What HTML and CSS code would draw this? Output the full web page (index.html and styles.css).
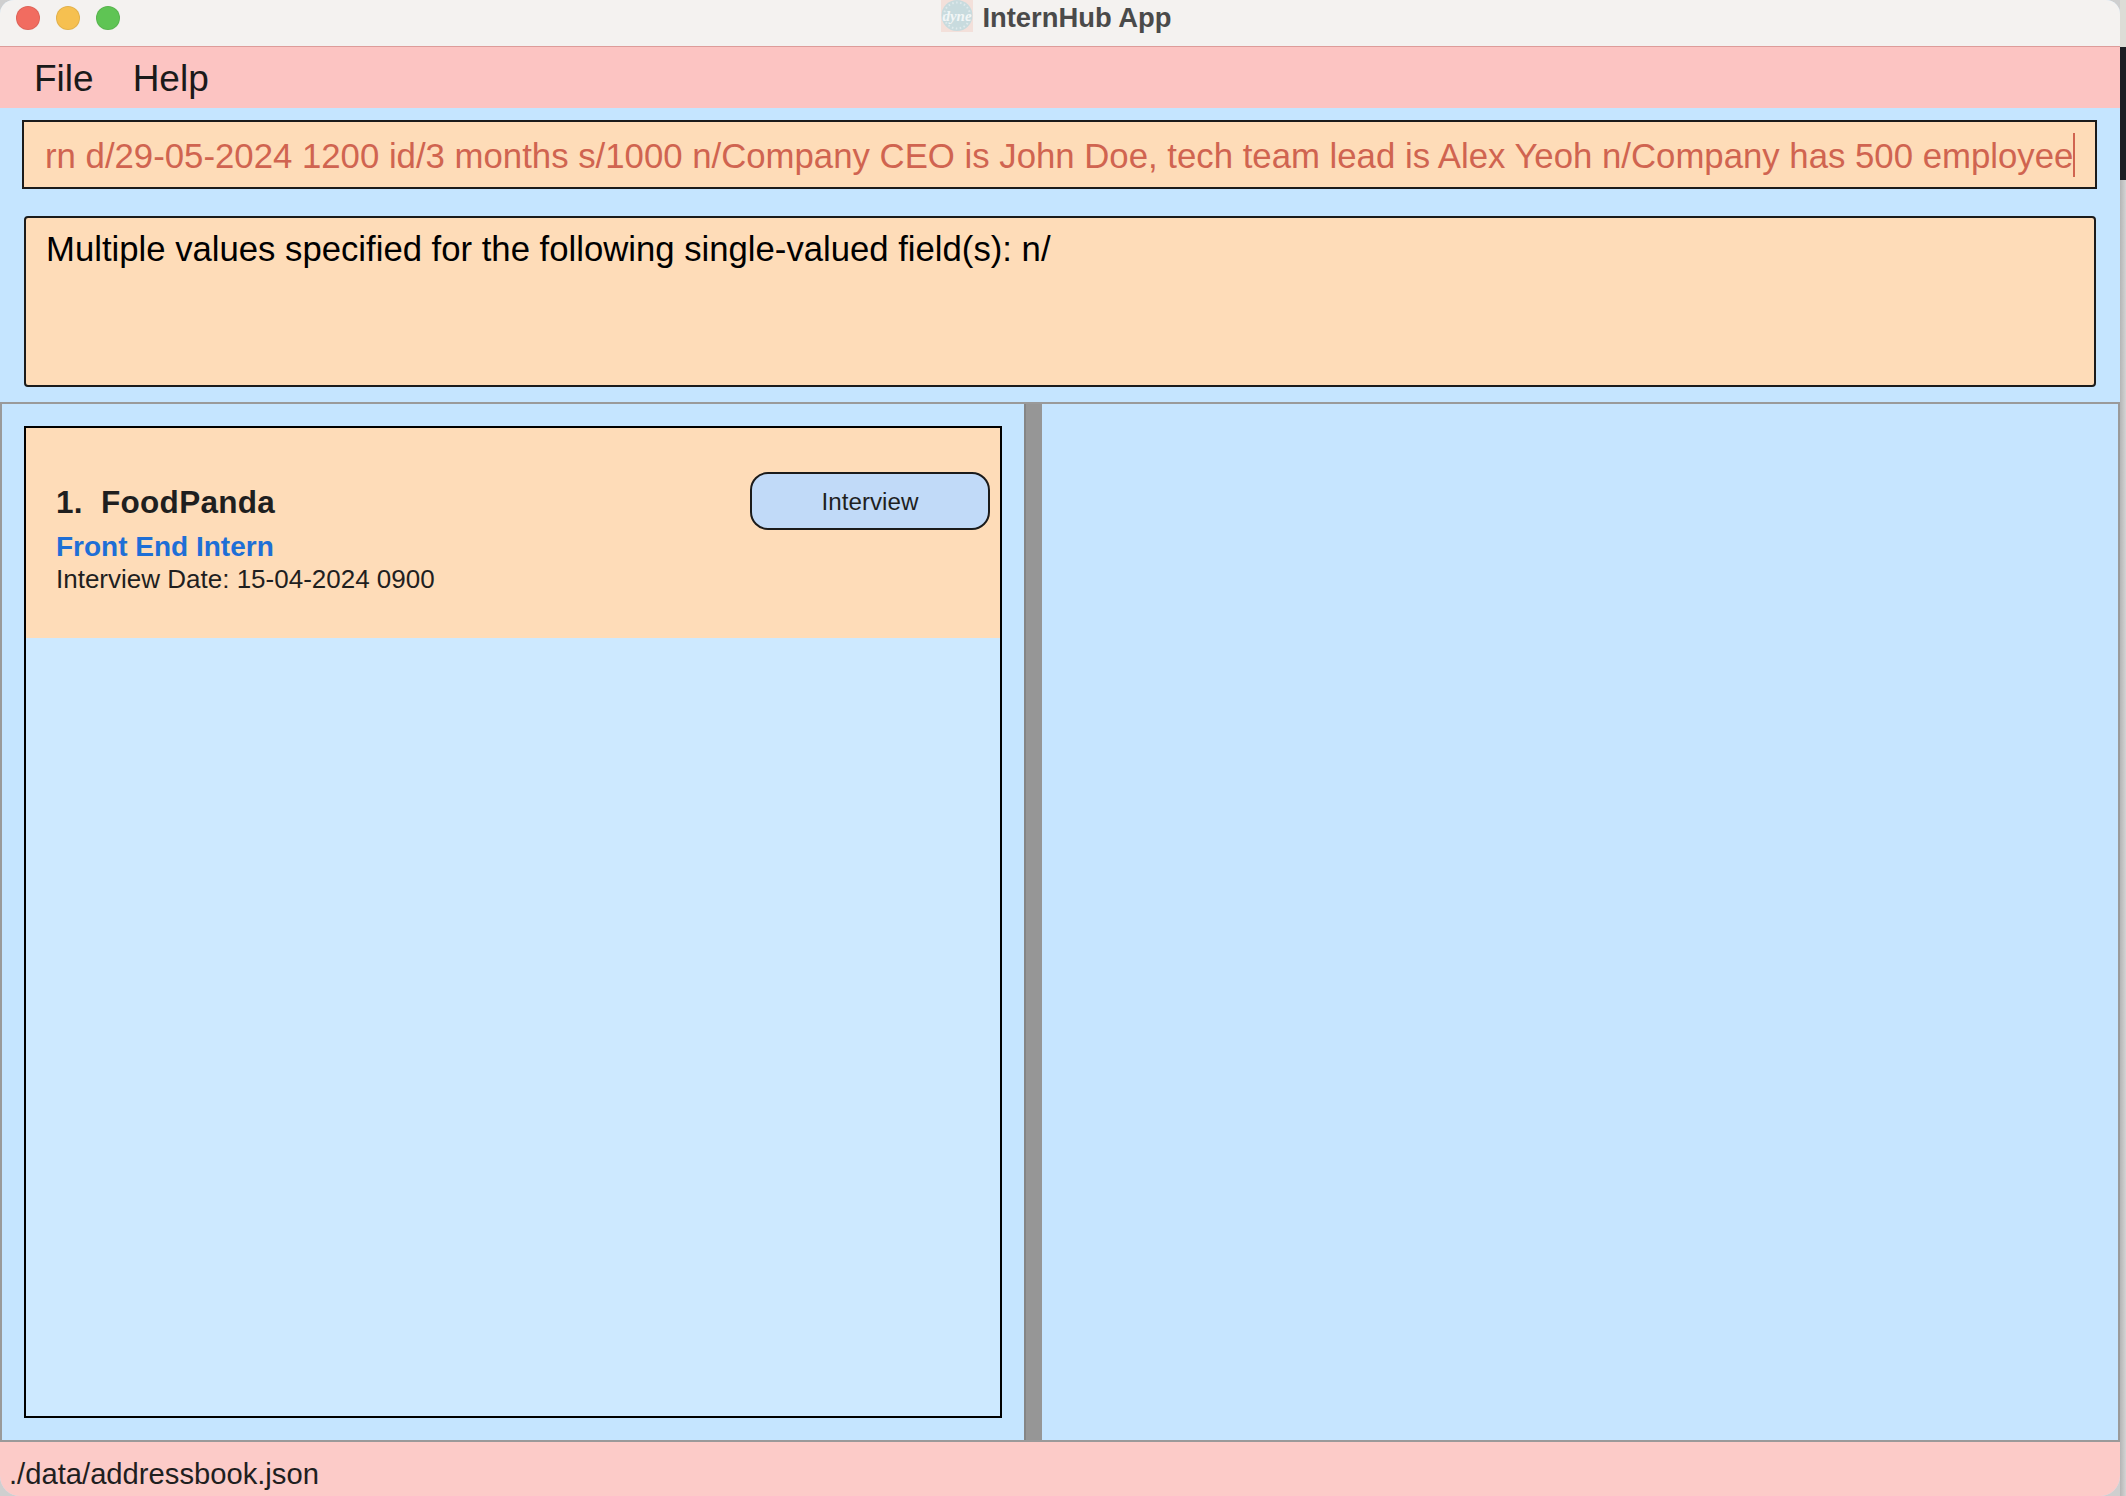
FILE: index.html
```html
<!DOCTYPE html>
<html lang="en">
<head>
<meta charset="utf-8">
<title>InternHub App</title>
<link rel="stylesheet" href="styles.css">
</head>
<body>
<div class="desktop">
  <main class="window">
    <header class="titlebar">
      <div class="lights">
        <span class="light red"></span>
        <span class="light yellow"></span>
        <span class="light green"></span>
      </div>
      <div class="title">
        <svg class="logo" width="32" height="32" viewBox="0 0 32 32" aria-hidden="true">
          <rect width="32" height="32" fill="#f3e0da"/>
          <circle cx="16" cy="15.500" r="15.500" fill="#c8dbde"/>
          <circle cx="16" cy="15.500" r="13" fill="none" stroke="#dfeaec" stroke-width="2" stroke-dasharray="1.500 2.500"/>
          <text x="16" y="21" text-anchor="middle" class="logo-text">dyne</text>
        </svg>
        <span class="title-text">InternHub App</span>
      </div>
    </header>
    <nav class="menubar">
      <span class="menu-item">File</span>
      <span class="menu-item">Help</span>
    </nav>
    <section class="top-area">
      <div class="command-box">
        <span class="command-text">rn d/29-05-2024 1200 id/3 months s/1000 n/Company CEO is John Doe, tech team lead is Alex Yeoh n/Company has 500 employee</span><span class="caret"></span>
      </div>
      <div class="result-box">Multiple values specified for the following single-valued field(s): n/</div>
    </section>
    <section class="split">
      <div class="left-pane">
        <div class="list">
          <article class="card">
            <div class="card-text">
              <div class="card-name">1.&nbsp; FoodPanda</div>
              <div class="card-role">Front End Intern</div>
              <div class="card-date">Interview Date: 15-04-2024 0900</div>
            </div>
            <div class="chip">Interview</div>
          </article>
        </div>
      </div>
      <div class="divider"></div>
      <div class="right-pane"></div>
    </section>
    <footer class="status">./data/addressbook.json</footer>
  </main>
  <aside class="side">
    <div class="side-top"></div>
    <div class="side-dark"></div>
    <div class="side-rest"></div>
  </aside>
</div>
</body>
</html>
```

FILE: styles.css
```css
* { box-sizing: border-box; }
html, body { margin: 0; padding: 0; height: 100%; }
body { background: #cfcfcf; font-family: "Liberation Sans", Arial, sans-serif; overflow: hidden; }

.desktop { display: flex; width: 2126px; height: 1496px; }

.window {
  width: 2120px;
  height: 1496px;
  display: flex;
  flex-direction: column;
  border-radius: 14px 14px 20px 20px;
  overflow: hidden;
  background: #c5e5ff;
  flex: none;
}

.titlebar {
  height: 47px;
  flex: none;
  background: #f4f2f0;
  border-bottom: 1px solid #dd9c9a;
  position: relative;
  display: flex;
  justify-content: center;
  padding-right: 7px;
}
.lights { position: absolute; left: 16px; top: 6px; display: flex; gap: 16px; }
.light { width: 24px; height: 24px; border-radius: 50%; border: 1px solid rgba(0,0,0,.08); }
.light.red { background: #f16c60; }
.light.yellow { background: #f6c050; }
.light.green { background: #5fc454; }

.title {
  display: flex;
  align-items: flex-start;
  gap: 9px;
  font-weight: 700;
  font-size: 27.400px;
  line-height: 34px;
  color: #4a4a4a;
}
.title-text { padding-top: 1px; }
.logo { display: block; flex: none; }
.logo-text { font-family: "Liberation Serif", serif; font-style: italic; font-size: 15px; fill: #f2f6f6; }

.menubar {
  height: 61px;
  flex: none;
  background: #fcc4c2;
  display: flex;
  align-items: center;
  gap: 39px;
  padding: 2px 0 0 34px;
  font-size: 37px;
  color: #1a1a1a;
}

.top-area { height: 294px; flex: none; padding: 12px 23px 0 22px; }
.command-box {
  height: 69px;
  border: 2px solid #1b1b1b;
  background: #fedcb8;
  display: flex;
  align-items: center;
  padding: 4px 0 0 21px;
  white-space: nowrap;
  overflow: hidden;
  color: #d06450;
  font-size: 34.750px;
}
.caret { width: 2px; height: 44px; margin: -4px 0 0 0; background: #d06450; flex: none; }

.result-box {
  height: 171px;
  margin: 27px 1px 0 2px;
  border: 2px solid #1b1b1b;
  border-radius: 4px;
  background: #fedcb8;
  color: #000;
  font-size: 34.700px;
  line-height: 42px;
  padding: 10px 20px;
}

.split {
  height: 1040px;
  flex: none;
  display: flex;
  border: 2px solid #9a9a9a;
}
.left-pane { width: 1022px; flex: none; padding: 22px; background: #c5e5ff; }
.list { height: 992px; border: 2px solid #000; background: #cde9ff; }
.card {
  height: 210px;
  background: #fedcb8;
  display: flex;
  justify-content: space-between;
  align-items: flex-start;
  padding: 44px 10px 0 30px;
}
.card-text { padding-top: 12px; }
.card-name { font-size: 31.500px; line-height: 36px; font-weight: 700; color: #1f1f1f; letter-spacing: .3px; }
.card-role { font-size: 28px; line-height: 32px; font-weight: 700; color: #1e6fd6; margin-top: 11px; }
.card-date { font-size: 26px; line-height: 32px; color: #1f1f1f; }
.chip {
  width: 240px;
  height: 58px;
  border: 2px solid #1b1b1b;
  border-radius: 18px;
  background: #c1daf8;
  color: #1f1f1f;
  font-size: 24.200px;
  padding-top: 1px;
  display: flex;
  align-items: center;
  justify-content: center;
}

.divider { width: 18px; flex: none; background: #969696; border-left: 2px solid #858585; }
.right-pane { flex: 1; background: #c6e5ff; }

.status {
  flex: 1;
  background: #fccbc8;
  color: #1f1f1f;
  font-size: 29.200px;
  line-height: 32px;
  padding: 16px 0 0 9px;
}

.side { width: 6px; flex: none; display: flex; flex-direction: column; }
.side-top { height: 47px; background: #dcdcd6; }
.side-dark { height: 133px; background: #1b1f24; }
.side-rest { flex: 1; background: linear-gradient(90deg, #b5b5b5, #d4d4d4); }
```
